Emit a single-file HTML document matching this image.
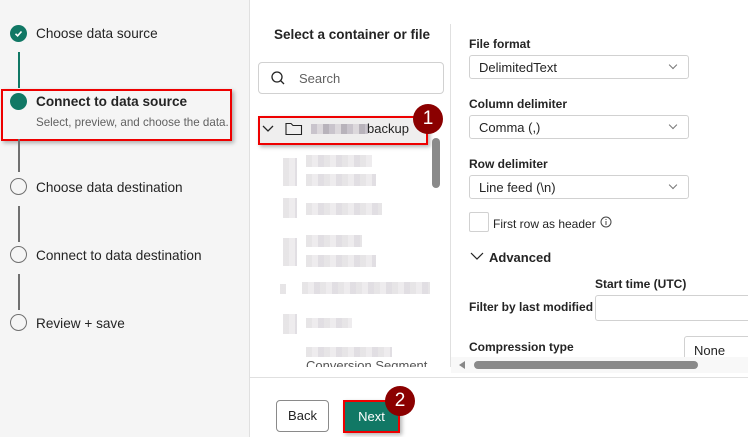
<!DOCTYPE html>
<html><head><style>
*{box-sizing:border-box;margin:0;padding:0}
body{width:748px;height:437px;overflow:hidden;background:#fff;font-family:"Liberation Sans",sans-serif;color:#242424;position:relative;font-size:13px}
.a{position:absolute}
.left{left:0;top:0;width:250px;height:437px;background:#f5f5f5;border-right:1px solid #e0e0e0}
.circ{width:17px;height:17px;border-radius:50%;border:1.5px solid #707070;background:#f5f5f5}
.vl{width:2px;background:#707070;left:18px}
.step{left:36px;font-size:13.6px;color:#242424}
.lbl{font-size:12px;font-weight:bold;left:469px}
.dd{left:469px;width:220px;height:24px;border:1px solid #d1d1d1;border-radius:3px;padding:4px 9px;font-size:13px}
.dd:after{content:"";position:absolute;right:12px;top:6px;width:5px;height:5px;border-right:1px solid #777;border-bottom:1px solid #777;transform:rotate(45deg)}
.blur{background:repeating-linear-gradient(90deg,#e4e2e4 0 6px,#eceaec 6px 12px,#dedbe0 12px 18px);opacity:.9}
</style></head><body>
<div class="a left"></div>
<div class="a" style="left:10px;top:25px;width:17px;height:17px;border-radius:50%;background:#117865"></div>
<svg class="a" style="left:10px;top:25px" width="17" height="17"><path d="M5.5 8.8 L7.6 10.8 L11.5 6.5" stroke="#fff" stroke-width="1.6" fill="none"/></svg>
<div class="a step" style="top:26px">Choose data source</div>
<div class="a vl" style="top:52px;height:36px;background:#117865"></div>
<div class="a" style="left:1px;top:89px;width:231px;height:52px;border:2px solid #e00;box-shadow:2px 2px 4px rgba(0,0,0,.3)"></div>
<div class="a" style="left:10px;top:93px;width:17px;height:17px;border-radius:50%;background:#117865"></div>
<div class="a step" style="top:94px;font-weight:bold">Connect to data source</div>
<div class="a" style="left:36px;top:116px;font-size:11.6px;color:#616161">Select, preview, and choose the data.</div>
<div class="a vl" style="top:139px;height:33px"></div>
<div class="a circ" style="left:10px;top:178px"></div>
<div class="a step" style="top:180px">Choose data destination</div>
<div class="a vl" style="top:206px;height:36px"></div>
<div class="a circ" style="left:10px;top:246px"></div>
<div class="a step" style="top:248px">Connect to data destination</div>
<div class="a vl" style="top:274px;height:36px"></div>
<div class="a circ" style="left:10px;top:314px"></div>
<div class="a step" style="top:316px">Review + save</div>

<div class="a" style="left:274px;top:27px;font-size:13.5px;font-weight:bold">Select a container or file</div>
<div class="a" style="left:258px;top:62px;width:186px;height:32px;border:1px solid #d1d1d1;border-radius:4px"></div>
<svg class="a" style="left:270px;top:70px" width="16" height="16"><circle cx="7" cy="7" r="5" stroke="#242424" stroke-width="1.3" fill="none"/><path d="M10.5 10.5 L14 14" stroke="#242424" stroke-width="1.3"/></svg>
<div class="a" style="left:299px;top:71px;font-size:13px;color:#616161">Search</div>
<div class="a" style="left:450px;top:24px;width:1px;height:343px;background:#e0e0e0"></div>

<div class="a" style="left:258px;top:116px;width:170px;height:29px;border:2px solid #e00;background:#efeeee;box-shadow:2px 2px 4px rgba(0,0,0,.3)"></div>
<svg class="a" style="left:262px;top:124px" width="12" height="10"><path d="M1 2 L6 7 L11 2" stroke="#242424" stroke-width="1.3" fill="none"/></svg>
<svg class="a" style="left:285px;top:122px" width="18" height="14"><path d="M1 1.5 H6 L8 3.5 H16.5 V12.5 H1 Z" stroke="#242424" stroke-width="1.1" fill="none"/></svg>
<div class="a" style="left:311px;top:124px;width:57px;height:10px;background:repeating-linear-gradient(90deg,#c9c4cc 0 6px,#dcd8dc 6px 12px,#b8b3bb 12px 18px)"></div>
<div class="a" style="left:367px;top:121px;font-size:13px">backup</div>
<div class="a" style="left:413px;top:104px;width:30px;height:30px;border-radius:50%;background:#8b0000;color:#fff;font-size:19px;text-align:center;line-height:30px">1</div>
<div class="a" style="left:432px;top:138px;width:8px;height:50px;border-radius:4px;background:#8a8a8a"></div>

<div class="a blur" style="left:283px;top:158px;width:14px;height:28px"></div>
<div class="a blur" style="left:306px;top:155px;width:66px;height:12px"></div>
<div class="a blur" style="left:306px;top:174px;width:70px;height:12px"></div>
<div class="a blur" style="left:283px;top:198px;width:14px;height:20px"></div>
<div class="a blur" style="left:306px;top:203px;width:76px;height:12px"></div>
<div class="a blur" style="left:283px;top:238px;width:14px;height:28px"></div>
<div class="a blur" style="left:306px;top:235px;width:56px;height:12px"></div>
<div class="a blur" style="left:306px;top:255px;width:70px;height:12px"></div>
<div class="a blur" style="left:280px;top:284px;width:6px;height:10px"></div>
<div class="a blur" style="left:302px;top:282px;width:128px;height:12px"></div>
<div class="a blur" style="left:283px;top:314px;width:14px;height:20px"></div>
<div class="a blur" style="left:306px;top:318px;width:46px;height:10px"></div>
<div class="a blur" style="left:306px;top:347px;width:86px;height:10px"></div>
<div class="a" style="left:306px;top:361px;width:130px;height:6px;overflow:hidden"><div style="font-size:13px;color:#555;margin-top:-3px">Conversion Segment</div></div>
<div class="a" style="left:250px;top:367px;width:200px;height:10px;background:#fff"></div>

<div class="a lbl" style="top:37px">File format</div>
<div class="a dd" style="top:55px">DelimitedText</div>
<div class="a lbl" style="top:97px">Column delimiter</div>
<div class="a dd" style="top:115px">Comma (,)</div>
<div class="a lbl" style="top:157px">Row delimiter</div>
<div class="a dd" style="top:175px">Line feed (\n)</div>
<div class="a" style="left:469px;top:212px;width:20px;height:20px;border:1px solid #d1d1d1;border-radius:2px"></div>
<div class="a" style="left:493px;top:217px;font-size:12px">First row as header</div>
<svg class="a" style="left:600px;top:216px" width="12" height="12"><circle cx="6" cy="6" r="5" stroke="#444" fill="none"/><path d="M6 5 V9 M6 3 V4" stroke="#444"/></svg>
<svg class="a" style="left:470px;top:252px" width="14" height="9"><path d="M1 1 L7 7 L13 1" stroke="#242424" stroke-width="1.2" fill="none"/></svg>
<div class="a" style="left:489px;top:250px;font-size:13px;font-weight:bold">Advanced</div>
<div class="a" style="left:595px;top:277px;font-size:12px;font-weight:bold">Start time (UTC)</div>
<div class="a" style="left:469px;top:300px;font-size:12px;font-weight:bold">Filter by last modified</div>
<div class="a" style="left:595px;top:295px;width:160px;height:26px;border:1px solid #d1d1d1;border-radius:3px"></div>
<div class="a" style="left:469px;top:340px;font-size:12px;font-weight:bold">Compression type</div>
<div class="a" style="left:684px;top:336px;width:80px;height:30px;border:1px solid #d1d1d1;border-radius:3px;padding:6px 9px;font-size:13px">None</div>
<div class="a" style="left:451px;top:357px;width:297px;height:16px;background:#f8f8f8"></div>
<svg class="a" style="left:459px;top:361px" width="6" height="8"><path d="M6 0 L0 4 L6 8Z" fill="#888"/></svg>
<div class="a" style="left:474px;top:361px;width:224px;height:8px;border-radius:4px;background:#8a8a8a"></div>
<div class="a" style="left:250px;top:377px;width:498px;height:1px;background:#e0e0e0"></div>

<div class="a" style="left:276px;top:400px;width:53px;height:32px;border:1px solid #8a8a8a;border-radius:4px;text-align:center;line-height:30px;font-size:13px">Back</div>
<div class="a" style="left:343px;top:400px;width:57px;height:33px;border:2px solid #e00;background:#117865;color:#fff;text-align:center;line-height:29px;font-size:13px;box-shadow:2px 2px 4px rgba(0,0,0,.3)">Next</div>
<div class="a" style="left:385px;top:386px;width:30px;height:30px;border-radius:50%;background:#8b0000;color:#fff;font-size:19px;text-align:center;line-height:30px">2</div>
</body></html>
